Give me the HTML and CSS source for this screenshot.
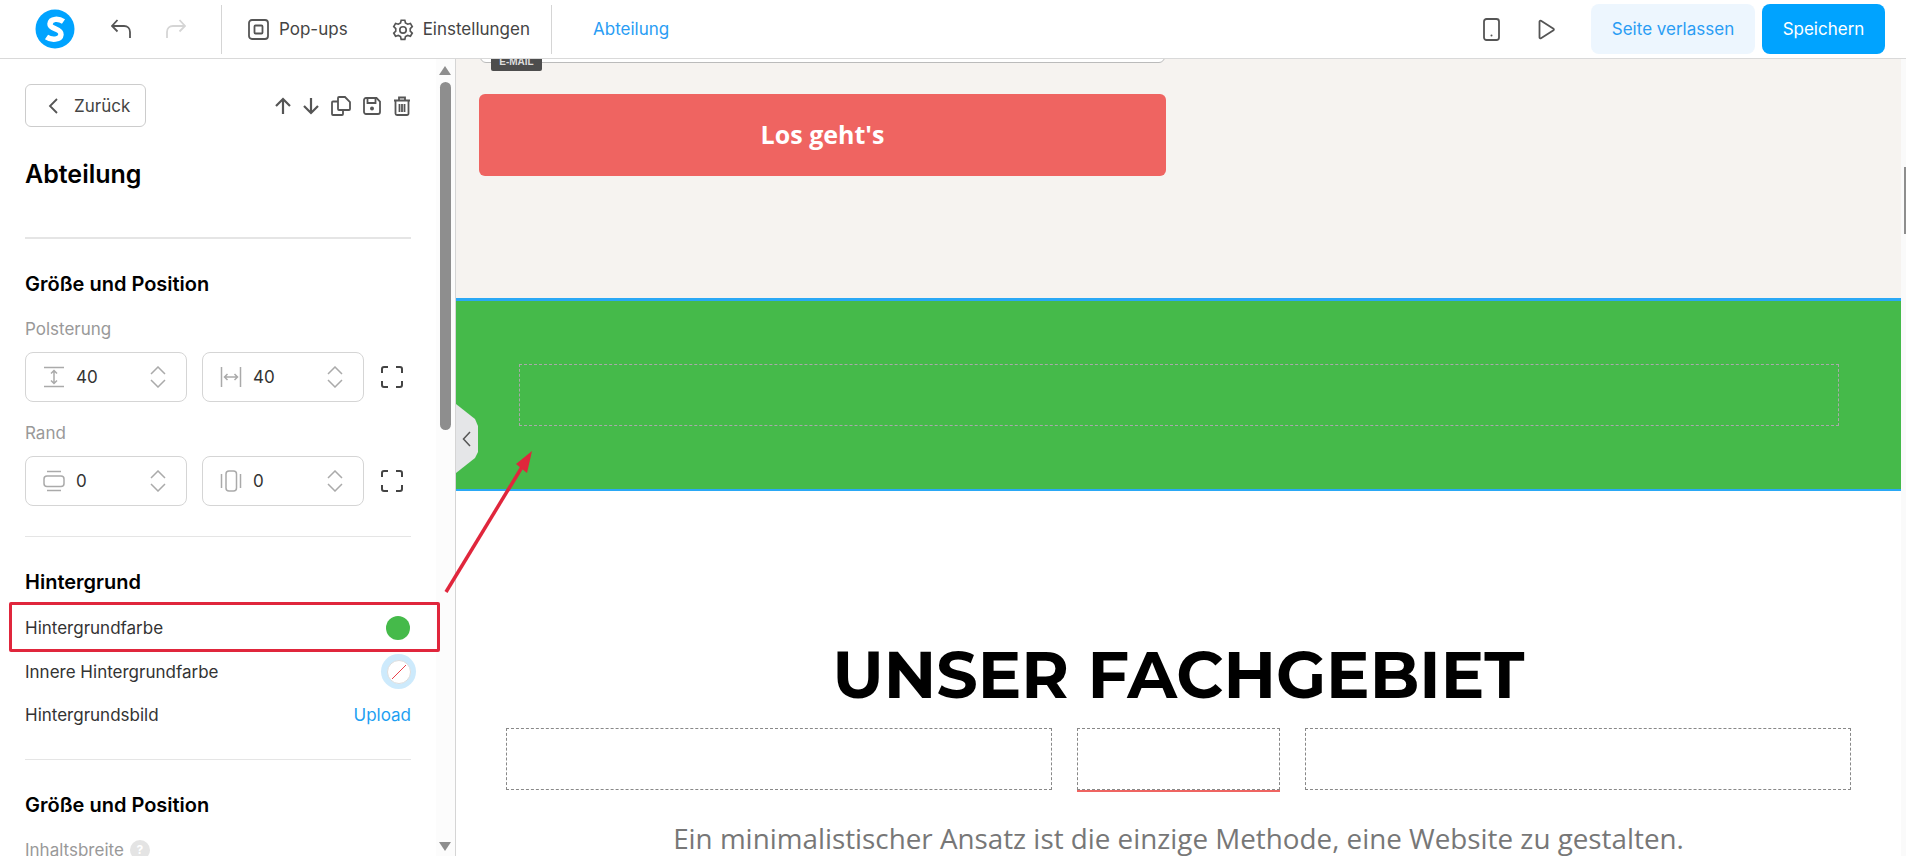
FILE: index.html
```html
<!DOCTYPE html>
<html lang="de">
<head>
    <meta charset="UTF-8">
    <title>Abteilung</title>
    <link rel="stylesheet" href="styles.css">
</head>
<body>
    <header class="topbar">
        <svg class="logo" width="40" height="40" viewBox="0 0 40 40">
            <circle cx="20" cy="20" r="19.5" fill="#00a3ff"/>
            <path d="M28.500 12.500C24 9.500 15.500 9 15 15c-.4 5.500 11.500 4 11 10.500C25.500 31 16.500 31.500 11.500 28" fill="none" stroke="#fff" stroke-width="5.500"/>
        </svg>
        <div class="history">
            <svg width="20" height="20" viewBox="0 0 20 20" class="ico ico-bold"><path d="M6.500 1 1 7l5.500 5.500M1 7h12c3.500 0 6 2.500 6 6v6"/></svg>
            <svg width="20" height="20" viewBox="0 0 20 20" class="ico ico-bold off"><path d="M13.500 1 19 7l-5.500 5.500M19 7H7c-3.500 0-6 2.500-6 6v6"/></svg>
        </div>
        <nav class="tools">
            <a class="tool">
                <svg width="21" height="21" viewBox="0 0 21 21" class="ico ico-bold"><rect x="1" y="1" width="19" height="19" rx="3"/><rect x="6.500" y="6.500" width="8" height="8" rx="1"/></svg>
                Pop-ups
            </a>
            <a class="tool tool-gear">
                <svg width="22" height="24" viewBox="0 0 24 24" class="ico ico-bold"><path d="M10 2.500h4l.7 3 2.400 1.300 3-.9 2 3.500-2.200 2.100v2.800l2.200 2.100-2 3.500-3-.9-2.400 1.300-.7 3h-4l-.7-3-2.400-1.300-3 .9-2-3.500 2.200-2.100V11.500L1.900 9.400l2-3.500 3 .9 2.400-1.300z"/><circle cx="12" cy="13" r="3.500"/></svg>
                Einstellungen
            </a>
        </nav>
        <div class="crumb">Abteilung</div>
        <div class="actions">
            <svg width="17" height="23" viewBox="0 0 17 23" class="ico ico-bold"><rect x="1" y="1" width="15" height="21" rx="2.500"/><circle cx="8.500" cy="17.500" r="1" fill="#555" stroke="none"/></svg>
            <svg width="17" height="21" viewBox="0 0 17 21" class="ico ico-bold play"><path d="M1.500 2.500a1 1 0 0 1 1.500-.8l12.500 8a1 1 0 0 1 0 1.600L3 19.300a1 1 0 0 1-1.500-.8z"/></svg>
            <button class="btn btn-light">Seite verlassen</button>
            <button class="btn btn-blue">Speichern</button>
        </div>
    </header>

    <div class="main">
        <aside class="sidebar">
            <div class="side-scroll">
                <div class="back-row">
                    <button class="back">
                        <svg width="10" height="16" viewBox="0 0 10 16" class="ico ico-bold"><path d="M9 1 2 8l7 7"/></svg>
                        Zurück
                    </button>
                    <div class="row-icons">
                        <svg width="16" height="18" viewBox="0 0 16 18" class="ico ico-thick"><path d="M8 17V2M1 9l7-7 7 7"/></svg>
                        <svg width="16" height="18" viewBox="0 0 16 18" class="ico ico-thick"><path d="M8 1v15M1 9l7 7 7-7"/></svg>
                        <svg width="20" height="20" viewBox="0 0 20 20" class="ico ico-bold"><path d="M8 1h6l5 5v7a1 1 0 0 1-1 1H8a1 1 0 0 1-1-1V2a1 1 0 0 1 1-1zM7 5.500H2a1 1 0 0 0-1 1V18a1 1 0 0 0 1 1h9a1 1 0 0 0 1-1v-4"/></svg>
                        <svg width="18" height="18" viewBox="0 0 18 18" class="ico ico-bold"><path d="M3 1h10.500L17 4.500V15a2 2 0 0 1-2 2H3a2 2 0 0 1-2-2V3a2 2 0 0 1 2-2z"/><path d="M4.500 1.500V6h8V1.500"/><circle cx="9" cy="11.500" r="2" fill="#555" stroke="none"/></svg>
                        <svg width="18" height="20" viewBox="0 0 18 20" class="ico ico-bold"><path d="M1 4.500h16M6 4V1.500h6V4M2.500 5v12.500A1.500 1.500 0 0 0 4 19h10a1.500 1.500 0 0 0 1.500-1.500V5M6.500 8v8M9 8v8M11.500 8v8"/></svg>
                    </div>
                </div>

                <h1 class="side-title">Abteilung</h1>

                <section class="group group-first">
                    <h2>Größe und Position</h2>
                    <div class="label">Polsterung</div>
                    <div class="fields">
                        <div class="field">
                            <svg width="22" height="22" viewBox="0 0 22 22" class="ico grey"><path d="M1 1.500h20M1 20.500h20M11 5v12M8 7.500 11 4.500l3 3M8 14.500l3 3 3-3"/></svg>
                            <span class="val">40</span>
                            <svg class="spin" width="16" height="22" viewBox="0 0 16 22"><path d="M1 8l7-7 7 7M1 14l7 7 7-7"/></svg>
                        </div>
                        <div class="field">
                            <svg width="22" height="22" viewBox="0 0 22 22" class="ico grey"><path d="M1.500 1v20M20.500 1v20M5 11h12M7.500 8l-3 3 3 3M14.500 8l3 3-3 3"/></svg>
                            <span class="val">40</span>
                            <svg class="spin" width="16" height="22" viewBox="0 0 16 22"><path d="M1 8l7-7 7 7M1 14l7 7 7-7"/></svg>
                        </div>
                        <svg class="expand" width="22" height="22" viewBox="0 0 22 22"><path d="M1 7V3a2 2 0 0 1 2-2h4M15 1h4a2 2 0 0 1 2 2v4M21 15v4a2 2 0 0 1-2 2h-4M7 21H3a2 2 0 0 1-2-2v-4"/></svg>
                    </div>
                    <div class="label label-second">Rand</div>
                    <div class="fields">
                        <div class="field">
                            <svg width="22" height="22" viewBox="0 0 22 22" class="ico grey"><path d="M4 1.500h14M4 20.500h14"/><rect x="1" y="6" width="20" height="10.500" rx="3"/></svg>
                            <span class="val">0</span>
                            <svg class="spin" width="16" height="22" viewBox="0 0 16 22"><path d="M1 8l7-7 7 7M1 14l7 7 7-7"/></svg>
                        </div>
                        <div class="field">
                            <svg width="22" height="22" viewBox="0 0 22 22" class="ico grey"><path d="M1.500 4v14M20.500 4v14"/><rect x="6" y="1" width="10.500" height="20" rx="3"/></svg>
                            <span class="val">0</span>
                            <svg class="spin" width="16" height="22" viewBox="0 0 16 22"><path d="M1 8l7-7 7 7M1 14l7 7 7-7"/></svg>
                        </div>
                        <svg class="expand" width="22" height="22" viewBox="0 0 22 22"><path d="M1 7V3a2 2 0 0 1 2-2h4M15 1h4a2 2 0 0 1 2 2v4M21 15v4a2 2 0 0 1-2 2h-4M7 21H3a2 2 0 0 1-2-2v-4"/></svg>
                    </div>
                </section>

                <section class="group group-bg">
                    <h2>Hintergrund</h2>
                    <div class="prop prop-marked">
                        <span>Hintergrundfarbe</span>
                        <span class="dot"></span>
                    </div>
                    <div class="prop">
                        <span>Innere Hintergrundfarbe</span>
                        <span class="dot-none">
                            <svg width="24" height="24" viewBox="0 0 24 24"><circle cx="12" cy="12" r="11.500" fill="#fff" stroke="#ddd"/><path d="M5 19 19 5" stroke="#e8404a"/></svg>
                        </span>
                    </div>
                    <div class="prop">
                        <span>Hintergrundsbild</span>
                        <a class="upload">Upload</a>
                    </div>
                </section>

                <section class="group group-last">
                    <h2>Größe und Position</h2>
                    <div class="label">Inhaltsbreite <span class="help">?</span></div>
                </section>
            </div>
            <div class="scrollbar">
                <span class="arrow-up"></span>
                <span class="thumb"></span>
                <span class="arrow-down"></span>
            </div>
        </aside>

        <main class="canvas">
            <div class="hero">
                <div class="email-box"></div>
                <span class="email-tag">E-MAIL</span>
                <div class="cta">Los geht's</div>
            </div>
            <div class="green">
                <div class="green-inner"></div>
            </div>
            <div class="special">
                <h2>UNSER FACHGEBIET</h2>
                <div class="slots">
                    <div class="slot slot-wide"></div>
                    <div class="slot slot-mid"></div>
                    <div class="slot slot-wide"></div>
                </div>
                <p>Ein minimalistischer Ansatz ist die einzige Methode, eine Website zu gestalten.</p>
            </div>
            <div class="collapse">
                <svg width="9" height="16" viewBox="0 0 9 16"><path d="M8 1 1.500 8 8 15" fill="none" stroke="#555" stroke-width="1.500"/></svg>
            </div>
        </main>
        <div class="page-scroll"><span class="page-thumb"></span></div>
    </div>

    <!-- annotation arrow from the marked row to the section -->
    <svg class="annotation" width="1906" height="866" viewBox="0 0 1906 866">
        <path d="M446 592 522 467" stroke="#e0263c" stroke-width="3.500" fill="none"/>
        <path d="M532 451 516 464 527 473z" fill="#e0263c"/>
    </svg>
</body>
</html>
```

FILE: styles.css
```css
* {
    box-sizing: border-box;
}
html, body {
    height: 100%;
}
body {
    margin: 0;
    overflow: hidden;
    font-family: Inter, "Liberation Sans", sans-serif;
    color: #333;
    background: #fff;
}
svg {
    display: block;
    flex: none;
}
.ico {
    fill: none;
    stroke: #555;
    stroke-width: 1.5;
}
.ico-bold {
    stroke-width: 1.8;
}
.ico-thick {
    stroke-width: 2.2;
}
.ico.off {
    stroke: #d5d5d5;
}
.ico.grey {
    stroke: #aaa;
}

/* top bar */
.topbar {
    position: relative;
    z-index: 2;
    height: 59px;
    display: flex;
    align-items: center;
    background: #fff;
    border-bottom: 1px solid #d9d9d9;
    padding-left: 35px;
}
.history {
    display: flex;
    gap: 35px;
    margin-left: 36px;
    margin-right: 35px;
}
.tools {
    display: flex;
    align-items: center;
    gap: 44px;
    height: 49px;
    padding: 0 21px 0 26px;
    border-left: 1px solid #d5d5d5;
    border-right: 1px solid #d5d5d5;
}
.tool {
    display: flex;
    align-items: center;
    gap: 10px;
    font-size: 17px;
    color: #444;
}
.tool-gear {
    gap: 9px;
}
.crumb {
    margin-left: 41px;
    font-size: 17px;
    color: #2a9df4;
}
.actions {
    margin-left: auto;
    display: flex;
    align-items: center;
    padding-right: 21px;
}
.play {
    margin-left: 38px;
    margin-right: 36px;
}
.btn {
    height: 50px;
    border: 0;
    border-radius: 8px;
    font-family: inherit;
    font-size: 17px;
}
.btn-light {
    width: 164px;
    background: #edf6fe;
    color: #2a9df4;
}
.btn-blue {
    width: 123px;
    margin-left: 7px;
    background: #00a3ff;
    color: #fff;
}

/* left panel */
.main {
    display: flex;
    height: calc(100vh - 69px);
}
.sidebar {
    width: 456px;
    flex: none;
    display: flex;
    border-right: 1px solid #d5d5d5;
    overflow: hidden;
}
.side-scroll {
    position: relative;
    z-index: 1;
    width: 436px;
    flex: none;
    padding: 25px 25px 0;
}
.back-row {
    display: flex;
    align-items: center;
    justify-content: space-between;
}
.back {
    width: 121px;
    height: 43px;
    display: flex;
    align-items: center;
    gap: 16px;
    padding: 0 0 0 22px;
    border: 1px solid #ccc;
    border-radius: 6px;
    background: #fff;
    font-family: inherit;
    font-size: 17px;
    color: #444;
}
.row-icons {
    display: flex;
    align-items: center;
    gap: 12px;
}
.side-title {
    margin: 31px 0 47px;
    font-size: 25px;
    line-height: 32px;
    font-weight: 600;
    color: #000;
}
.group {
    border-top: 1px solid #e5e5e5;
    padding: 32px 0 30px;
}
.group-first {
    border-top-width: 2px;
}
.group h2 {
    margin: 0 0 20px;
    font-size: 20px;
    line-height: 26px;
    font-weight: 600;
    color: #000;
}
.group-bg {
    padding-bottom: 23px;
}
.group-bg h2 {
    margin-bottom: 7px;
}
.group-last {
    padding-bottom: 0;
}
.group-last h2 {
    margin-bottom: 20px;
}
.label {
    display: flex;
    align-items: center;
    gap: 6px;
    font-size: 17px;
    line-height: 24px;
    color: #999;
    margin-bottom: 11px;
}
.label-second {
    margin-top: 19px;
}
.help {
    width: 20px;
    height: 20px;
    border-radius: 50%;
    background: #e4e4e4;
    color: #fff;
    font-size: 12px;
    font-weight: 700;
    display: flex;
    align-items: center;
    justify-content: center;
}
.fields {
    display: flex;
    align-items: center;
    gap: 15px;
}
.field {
    width: 162px;
    height: 50px;
    display: flex;
    align-items: center;
    padding: 0 20px 0 17px;
    border: 1px solid #d5d5d5;
    border-radius: 8px;
}
.val {
    margin-left: 11px;
    flex: 1;
    font-size: 17px;
    color: #333;
}
.spin {
    fill: none;
    stroke: #aaa;
    stroke-width: 1.5;
}
.expand {
    fill: none;
    stroke: #444;
    stroke-width: 2;
    margin-left: 2px;
}
.prop {
    display: flex;
    align-items: center;
    justify-content: space-between;
    height: 43px;
    font-size: 17px;
    color: #333;
}
.prop-marked {
    height: 50px;
    margin: 0 -29px -2px -16px;
    padding: 2px 27px 0 13px;
    border: 3px solid #e0263c;
    border-radius: 2px;
}
.dot {
    width: 24px;
    height: 24px;
    border-radius: 50%;
    background: #45ba4a;
}
.dot-none {
    width: 35px;
    height: 35px;
    border-radius: 50%;
    background: #cdeafc;
    display: flex;
    align-items: center;
    justify-content: center;
    margin-right: -5px;
}
.upload {
    color: #1e9ff2;
}
.scrollbar {
    position: relative;
    flex: 1;
    background: #fcfcfc;
}
.thumb {
    position: absolute;
    left: 4px;
    top: 23px;
    width: 11px;
    height: 348px;
    border-radius: 6px;
    background: #8e8e8e;
}
.arrow-up, .arrow-down {
    position: absolute;
    left: 3px;
    width: 0;
    height: 0;
    border-left: 6.5px solid transparent;
    border-right: 6.5px solid transparent;
}
.arrow-up {
    top: 7px;
    border-bottom: 9px solid #8e8e8e;
}
.arrow-down {
    bottom: 5px;
    border-top: 9px solid #8e8e8e;
}

/* page being edited */
.canvas {
    position: relative;
    flex: 1;
    overflow: hidden;
    background: #fff;
}
.hero {
    position: relative;
    height: 239px;
    background: #f6f3f0;
    padding: 35px 0 0 23px;
}
.email-box {
    position: absolute;
    left: 24px;
    top: -29px;
    width: 685px;
    height: 33px;
    background: #fff;
    border: 1px solid #bbb;
    border-radius: 6px;
}
.email-tag {
    position: absolute;
    left: 35px;
    top: 0;
    width: 51px;
    height: 12px;
    border-radius: 0 0 2px 2px;
    background: #4d4d4d;
    color: #ddd;
    font-family: "Liberation Sans", sans-serif;
    font-size: 10px;
    font-weight: 700;
    line-height: 6px;
    text-align: center;
}
.cta {
    width: 687px;
    height: 82px;
    border-radius: 6px;
    background: #ef6461;
    color: #fff;
    font-family: "Open Sans", sans-serif;
    font-size: 25px;
    font-weight: 700;
    line-height: 80px;
    text-align: center;
}
.green {
    height: 193px;
    padding: 63px 62px 0 63px;
    background: #45ba4a;
    border-top: 3px solid #2aa8f5;
    border-bottom: 2px solid #2aa8f5;
}
.green-inner {
    height: 62px;
    border: 1px dashed #a9a9a9;
}
.special {
    padding-top: 144px;
    text-align: center;
}
.special h2 {
    margin: 0;
    font-family: Montserrat, "Open Sans", sans-serif;
    font-size: 65px;
    line-height: 80px;
    font-weight: 700;
    color: #000;
}
.slots {
    display: flex;
    gap: 25px;
    margin-top: 13px;
    padding: 0 50px;
}
.slot {
    height: 62px;
    border: 1px dashed #888;
}
.slot-wide {
    flex: 1;
}
.slot-mid {
    position: relative;
    width: 203px;
    flex: none;
}
.slot-mid::after {
    content: "";
    position: absolute;
    left: -1px;
    right: -1px;
    bottom: -3px;
    height: 2px;
    background: #ef6461;
}
.special p {
    margin: 30px 0 0;
    font-family: "Open Sans", sans-serif;
    font-size: 27.8px;
    line-height: 36px;
    color: #777;
}
.collapse {
    position: absolute;
    left: 0;
    top: 345px;
    width: 22px;
    height: 70px;
    background: #e5e6e8;
    clip-path: polygon(0 0, 19px 15px, 22px 22px, 22px 48px, 19px 54px, 0 69px);
    display: flex;
    align-items: center;
    padding-left: 6px;
}
.page-scroll {
    position: relative;
    width: 5px;
    flex: none;
    background: #fafafa;
}
.page-thumb {
    position: absolute;
    right: 0;
    top: 108px;
    width: 2px;
    height: 67px;
    background: #8e8e8e;
}

/* red arrow lies over everything */
.annotation {
    position: absolute;
    left: 0;
    top: 0;
    pointer-events: none;
}
```
